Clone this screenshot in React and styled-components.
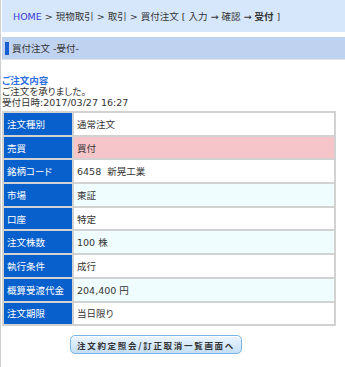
import React from "react";
import styled, { createGlobalStyle } from "styled-components";

const GlobalStyle = createGlobalStyle`
  html, body { margin: 0; padding: 0; background: #fff; }
  body {
    font-family: "DejaVu Sans", "Noto Sans CJK JP", sans-serif;
    font-size: 9.5px;
    color: #333;
    font-feature-settings: "palt";
  }
`;

const Page = styled.div`
  width: 345px;
  min-height: 367px;
  box-sizing: border-box;
  border-left: 1px solid #cfcfcf;
  padding-left: 1px;
`;

const Breadcrumb = styled.div`
  height: 32px;
  background: #d7e7fb;
  display: flex;
  align-items: center;
  padding-left: 11px;
  white-space: pre;
  font-size: 9.5px;
`;

const HomeLink = styled.span`
  color: #3a3ad6;
`;

const Current = styled.span`
  font-weight: bold;
`;

const TitleBar = styled.div`
  margin-top: 5px;
  height: 22px;
  background: #bfd2f0;
  border-bottom: 1px solid #e2e2e2;
  display: flex;
  align-items: center;
  padding-left: 3px;
  white-space: pre;
`;

const Marker = styled.span`
  width: 4px;
  height: 13px;
  background: #175fd3;
  margin-right: 3px;
`;

const Info = styled.div`
  padding-top: 15px;
  line-height: 11px;
`;

const InfoHead = styled.div`
  color: #2f6fe0;
  font-weight: bold;
`;

const Table = styled.table`
  margin-top: 3px;
  width: 334px;
  border-spacing: 2px;
  background: #d2d2d2;
  table-layout: fixed;
`;

const LabelCell = styled.td`
  width: 62px;
  height: 21.7px;
  padding: 0 3px;
  background: #0860cc;
  color: #fff;
  white-space: nowrap;
`;

const ValueCell = styled.td`
  height: 21.7px;
  padding: 0 3px;
  background: ${(p) =>
    p.$tone === "pink" ? "#f6c5ca" : p.$tone === "cyan" ? "#f0fdfe" : "#fff"};
  white-space: pre;
`;

const ButtonRow = styled.div`
  display: flex;
  padding-left: 68px;
  margin-top: 9px;
`;

const ActionButton = styled.button`
  width: 172px;
  height: 19px;
  padding: 0;
  border: 1px solid #79b4e6;
  border-radius: 5px;
  background: linear-gradient(#eef6fe, #c3def6);
  box-shadow: inset 0 1px 0 #fff;
  font-family: "Noto Sans CJK JP", sans-serif;
  font-size: 8.5px;
  font-weight: bold;
  letter-spacing: 1.7px;
  color: #333;
  display: flex;
  align-items: center;
  justify-content: center;
`;

const rows = [
  ["注文種別", "通常注文", "white"],
  ["売買", "買付", "pink"],
  ["銘柄コード", "6458  新晃工業", "white"],
  ["市場", "東証", "cyan"],
  ["口座", "特定", "white"],
  ["注文株数", "100 株", "cyan"],
  ["執行条件", "成行", "white"],
  ["概算受渡代金", "204,400 円", "cyan"],
  ["注文期限", "当日限り", "white"],
];

export default function App() {
  return (
    <>
      <GlobalStyle />
      <Page>
        <Breadcrumb>
          <HomeLink>HOME</HomeLink>
          {" > 現物取引 > 取引 > 買付注文 [ 入力 → 確認 → "}
          <Current>受付</Current>
          {" ]"}
        </Breadcrumb>
        <TitleBar>
          <Marker />
          {"買付注文 -受付-"}
        </TitleBar>
        <Info>
          <InfoHead>ご注文内容</InfoHead>
          <div>ご注文を承りました。</div>
          <div>受付日時:2017/03/27 16:27</div>
        </Info>
        <Table>
          <tbody>
            {rows.map(([label, value, tone]) => (
              <tr key={label}>
                <LabelCell>{label}</LabelCell>
                <ValueCell $tone={tone}>{value}</ValueCell>
              </tr>
            ))}
          </tbody>
        </Table>
        <ButtonRow>
          <ActionButton>注文約定照会/訂正取消一覧画面へ</ActionButton>
        </ButtonRow>
      </Page>
    </>
  );
}
